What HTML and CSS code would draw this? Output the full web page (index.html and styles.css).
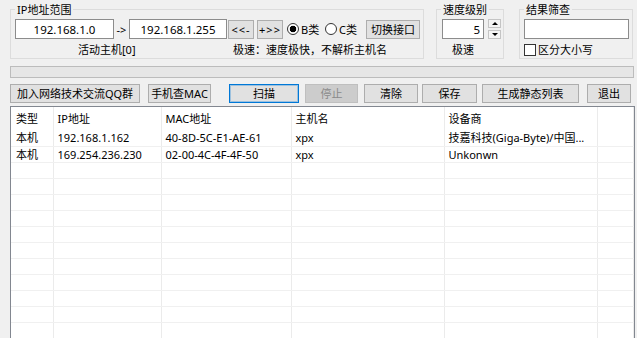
FILE: index.html
```html
<!DOCTYPE html>
<html>
<head>
   <meta charset="utf-8">
   <title>局域网扫描</title>
   <link rel="stylesheet" href="styles.css">
</head>
<body>
<div class="groups">
   <fieldset class="grp grp-ip">
      <legend>IP地址范围</legend>
      <div class="row">
         <input class="txt ip-from" value="192.168.1.0">
         <span class="arrow">-&gt;</span>
         <input class="txt ip-to" value="192.168.1.255">
         <button class="btn btn-prev">&lt;&lt;-</button>
         <button class="btn btn-next">+&gt;&gt;</button>
         <label class="opt opt-b"><span class="radio on"></span>B类</label>
         <label class="opt opt-c"><span class="radio"></span>C类</label>
         <button class="btn btn-iface">切换接口</button>
      </div>
      <div class="row2">
         <span class="hosts">活动主机[0]</span>
         <span class="mode">极速：速度极快，不解析主机名</span>
      </div>
   </fieldset>

   <fieldset class="grp grp-speed">
      <legend>速度级别</legend>
      <div class="row">
         <input class="txt spin-val" value="5">
         <div class="spin">
            <span class="spin-btn up"></span>
            <span class="spin-btn down"></span>
         </div>
      </div>
      <div class="row2">
         <span class="speed-note">极速</span>
      </div>
   </fieldset>

   <fieldset class="grp grp-filter">
      <legend>结果筛查</legend>
      <div class="row">
         <input class="txt filter" value="">
      </div>
      <div class="row2">
         <label class="case"><span class="chk"></span>区分大小写</label>
      </div>
   </fieldset>
</div>

<div class="progress"></div>

<div class="tools">
   <button class="btn b-qq">加入网络技术交流QQ群</button>
   <button class="btn b-mac">手机查MAC</button>
   <button class="btn b-scan">扫描</button>
   <button class="btn b-stop" disabled>停止</button>
   <button class="btn b-clear">清除</button>
   <button class="btn b-save">保存</button>
   <button class="btn b-static">生成静态列表</button>
   <button class="btn b-exit">退出</button>
</div>

<div class="list">
   <table>
      <colgroup>
         <col class="c-type"><col class="c-ip"><col class="c-mac"><col class="c-host"><col class="c-vendor"><col>
      </colgroup>
      <thead>
         <tr><th class="first">类型</th><th>IP地址</th><th>MAC地址</th><th>主机名</th><th>设备商</th><th></th></tr>
      </thead>
      <tbody>
         <tr><td class="first">本机</td><td>192.168.1.162</td><td>40-8D-5C-E1-AE-61</td><td>xpx</td><td>技嘉科技(Giga-Byte)/中国...</td><td></td></tr>
         <tr><td class="first">本机</td><td>169.254.236.230</td><td>02-00-4C-4F-4F-50</td><td>xpx</td><td>Unkonwn</td><td></td></tr>
         <tr><td></td><td></td><td></td><td></td><td></td><td></td></tr>
         <tr><td></td><td></td><td></td><td></td><td></td><td></td></tr>
         <tr><td></td><td></td><td></td><td></td><td></td><td></td></tr>
         <tr><td></td><td></td><td></td><td></td><td></td><td></td></tr>
         <tr><td></td><td></td><td></td><td></td><td></td><td></td></tr>
         <tr><td></td><td></td><td></td><td></td><td></td><td></td></tr>
         <tr><td></td><td></td><td></td><td></td><td></td><td></td></tr>
         <tr><td></td><td></td><td></td><td></td><td></td><td></td></tr>
         <tr><td></td><td></td><td></td><td></td><td></td><td></td></tr>
         <tr><td></td><td></td><td></td><td></td><td></td><td></td></tr>
         <tr><td></td><td></td><td></td><td></td><td></td><td></td></tr>
      </tbody>
   </table>
</div>
</body>
</html>
```

FILE: styles.css
```css
* { box-sizing: border-box; }
html, body { height: 338px; overflow: hidden; }
body { margin: 0; background: #f0f0f0; color: #000; font: 11px/13px "Noto Sans", "Noto Sans CJK SC", sans-serif; }

/* group boxes */
.groups { display: flex; padding: 3px 0 0 10px; }
.grp { margin: 0; padding: 0; min-width: 0; height: 56px; border: 1px solid #dcdcdc; }
.grp legend { margin-left: 4px; padding: 0 2px; line-height: 13px; }
.grp-ip { width: 414px; }
.grp-speed { width: 68px; margin-left: 12px; }
.grp-filter { width: 114px; margin-left: 15px; }

.row { display: flex; align-items: center; height: 20px; margin-top: 3px; }
.row2 { display: flex; align-items: center; height: 13px; margin-top: 4px; }

.txt { height: 20px; padding: 0; border: 1px solid #8c8c8c; background: #fff; color: #000; font: inherit; font-size: 11.5px; text-align: center; }
.ip-from { width: 99px; margin-left: 4px; }
.arrow { width: 15px; text-align: center; }
.ip-to { width: 98px; }

.btn { height: 19px; padding: 0; border: 1px solid #adadad; background: #e1e1e1; color: #000; font: inherit; }
.btn-prev { width: 26px; margin-left: 1px; letter-spacing: 1px; }
.btn-next { width: 26px; margin-left: 3px; letter-spacing: 1px; }
.btn-iface { width: 54px; }

.opt { display: flex; align-items: center; }
.opt-b { width: 38px; margin-left: 4px; }
.opt-c { width: 41px; }
.radio { width: 12px; height: 12px; margin-right: 2px; border: 1px solid #333; border-radius: 50%; background: #fff; }
.radio.on { background: radial-gradient(circle, #000 0 3px, #fff 3.6px); }

.hosts { width: 222px; padding-left: 67px; }

.spin-val { width: 42px; margin-left: 5px; text-align: right; padding-right: 3px; }
.spin { display: flex; flex-direction: column; justify-content: space-between; width: 13px; height: 20px; margin-left: 4px; }
.spin-btn { display: flex; align-items: center; justify-content: center; height: 9px; border: 1px solid #c4c4c4; background: #f4f4f4; }
.spin-btn::after { content: ""; border-left: 3px solid transparent; border-right: 3px solid transparent; }
.spin-btn.up::after { border-bottom: 3px solid #000; }
.spin-btn.down::after { border-top: 3px solid #000; }
.speed-note { width: 42px; margin-left: 5px; text-align: center; }

.filter { width: 105px; margin-left: 4px; }
.case { display: flex; align-items: center; margin-left: 4px; }
.chk { width: 12px; height: 12px; margin-right: 2px; border: 1px solid #333; background: #fff; }

/* progress */
.progress { width: 624px; height: 12px; margin: 7px 0 0 10px; border: 1px solid #bcbcbc; background: #e6e6e6; }

/* toolbar */
.tools { display: flex; margin: 6px 0 0 10px; }
.b-qq { width: 130px; }
.b-mac { width: 63px; margin-left: 8px; }
.b-scan { width: 70px; margin-left: 18px; border-color: #0078d7; box-shadow: inset 0 0 0 1px rgba(0, 120, 215, 0.3); }
.b-stop { width: 53px; margin-left: 6px; background: #cccccc; border-color: #bfbfbf; color: #8a8a8a; }
.b-clear { width: 54px; margin-left: 6px; }
.b-save { width: 55px; margin-left: 4px; }
.b-static { width: 97px; margin-left: 5px; }
.b-exit { width: 44px; margin-left: 8px; }

/* result list */
.list { width: 625px; height: 240px; margin: 3px 0 0 10px; border: 1px solid #828790; border-bottom: 0; background: #fff; }
.list table { width: 100%; border-collapse: collapse; table-layout: fixed; }
.c-type { width: 42px; }
.c-ip { width: 108px; }
.c-mac { width: 130px; }
.c-host { width: 153px; }
.c-vendor { width: 153px; }
.list th, .list td { padding: 0 0 0 4px; border-right: 1px solid #ebebeb; text-align: left; font-weight: normal; white-space: nowrap; overflow: hidden; }
.list th { height: 23px; }
.list td { height: 16px; border-bottom: 1px solid #f0f0f0; }
.list .first { padding-left: 5px; }
```
